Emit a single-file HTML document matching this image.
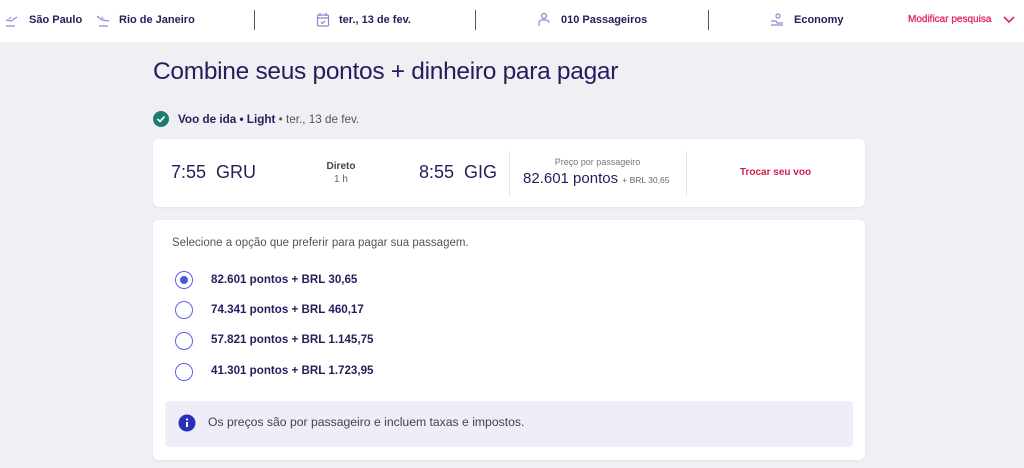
<!DOCTYPE html>
<html><head><meta charset="utf-8"><style>
*{box-sizing:border-box;margin:0;padding:0}
body{width:1024px;height:468px;overflow:hidden;background:#f0eff4;font-family:"Liberation Sans",sans-serif;color:#2a1b5c;position:relative}
.hdr{position:absolute;left:0;top:0;width:1024px;height:42px;background:#fff;font-size:11px;font-weight:bold;color:#2a1b5c}
.hdr span{position:absolute;top:14px;white-space:nowrap}
.sep{position:absolute;top:10px;width:1px;height:20px;background:#555}
.ic{position:absolute;top:12px}
.abs{position:absolute;white-space:nowrap}
.card{position:absolute;background:#fff;border-radius:6px;box-shadow:0 1px 2px rgba(0,0,0,.06)}
.radio{position:absolute;left:175px;width:18px;height:18px;border:1.5px solid #5b63e0;border-radius:50%}
.opt{position:absolute;left:211px;font-size:11.6px;font-weight:bold;color:#2a1b5c}
</style></head><body>
<div class="hdr">
<svg class="ic" style="left:5px" width="14" height="16" viewBox="0 0 14 16" fill="none" stroke="#9b7fd4" stroke-width="1.2"><path d="M1 8 L6 9 L12 5 M4 7 L6 5 M1 14 H10"/></svg>
<span style="left:29px">São Paulo</span>
<svg class="ic" style="left:96px" width="14" height="16" viewBox="0 0 14 16" fill="none" stroke="#9b7fd4" stroke-width="1.2"><path d="M1 4 L6 8 L13 9 M6 5 L7 7 M3 14 H12"/></svg>
<span style="left:119px">Rio de Janeiro</span>
<div class="sep" style="left:254px"></div>
<svg class="ic" style="left:316px" width="14" height="16" viewBox="0 0 14 16" fill="none" stroke="#9b7fd4" stroke-width="1.2"><rect x="1.5" y="3" width="11" height="11" rx="1"/><path d="M4 1v3M10 1v3M1.5 6h11M5 10l1.5 1.5L9 9"/></svg>
<span style="left:339px">ter., 13 de fev.</span>
<div class="sep" style="left:475px"></div>
<svg class="ic" style="left:537px" width="14" height="16" viewBox="0 0 14 16" fill="none" stroke="#9b7fd4" stroke-width="1.2"><circle cx="7" cy="4" r="2.5"/><path d="M2 14v-3a3 3 0 0 1 3-3h4a3 3 0 0 1 3 3"/></svg>
<span style="left:561px">010 Passageiros</span>
<div class="sep" style="left:708px"></div>
<svg class="ic" style="left:769px" width="16" height="16" viewBox="0 0 16 16" fill="none" stroke="#9b7fd4" stroke-width="1.2"><circle cx="9" cy="4" r="2"/><path d="M2 9h5l1 2h6M2 13h12"/></svg>
<span style="left:794px">Economy</span>
<span style="left:908px;color:#e0245e;font-size:10px;font-weight:normal;-webkit-text-stroke:0.3px #e0245e">Modificar pesquisa</span>
<svg class="ic" style="left:1003px;top:16px" width="12" height="8" viewBox="0 0 12 8" fill="none" stroke="#e0245e" stroke-width="1.6"><path d="M1 1l5 5 5-5"/></svg>
</div>

<div class="abs" style="left:153px;top:58px;font-size:24.5px;color:#2a1b5c;letter-spacing:-0.3px">Combine seus pontos + dinheiro para pagar</div>

<svg class="abs" style="left:153px;top:111px" width="16" height="16" viewBox="0 0 16 16"><circle cx="8" cy="8" r="8" fill="#1c7d6e"/><path d="M4.5 8l2.5 2.5 4.5-5" stroke="#fff" stroke-width="1.8" fill="none"/></svg>
<div class="abs" style="left:178px;top:113px;font-size:11.7px;font-weight:bold">Voo de ida • Light <span style="font-weight:normal;color:#555">• ter., 13 de fev.</span></div>

<div class="card" style="left:153px;top:139px;width:712px;height:68px">
<div class="abs" style="left:18px;top:23px;font-size:18px;color:#2a1b5c">7:55 &nbsp;GRU</div>
<div class="abs" style="left:173px;top:22px;font-size:10px;font-weight:bold;color:#444;text-align:center;width:30px">Direto</div>
<div class="abs" style="left:173px;top:35px;font-size:10px;color:#666;text-align:center;width:30px">1 h</div>
<div class="abs" style="left:266px;top:23px;font-size:18px;color:#2a1b5c">8:55 &nbsp;GIG</div>
<div class="abs" style="left:356px;top:12px;width:1px;height:45px;background:#e2e2e8"></div>
<div class="abs" style="left:356px;top:18px;width:177px;text-align:center;font-size:9px;color:#777">Preço por passageiro</div>
<div class="abs" style="left:370px;top:31px;font-size:15px;color:#2a1b5c">82.601 pontos <span style="font-size:8.5px;color:#666">+ BRL 30,65</span></div>
<div class="abs" style="left:533px;top:12px;width:1px;height:45px;background:#e2e2e8"></div>
<div class="abs" style="left:533px;top:28px;width:179px;text-align:center;font-size:10px;font-weight:bold;color:#d01f4b">Trocar seu voo</div>
</div>

<div class="card" style="left:153px;top:220px;width:712px;height:240px"></div>
<div class="abs" style="left:172px;top:237px;font-size:11.5px;color:#555">Selecione a opção que preferir para pagar sua passagem.</div>
<div class="radio" style="top:271px"><div style="position:absolute;left:3.5px;top:3.5px;width:8px;height:8px;border-radius:50%;background:#4a55e0"></div></div>
<div class="opt" style="top:273px">82.601 pontos + BRL 30,65</div>
<div class="radio" style="top:301px"></div>
<div class="opt" style="top:303px">74.341 pontos + BRL 460,17</div>
<div class="radio" style="top:332px"></div>
<div class="opt" style="top:333px">57.821 pontos + BRL 1.145,75</div>
<div class="radio" style="top:363px"></div>
<div class="opt" style="top:364px">41.301 pontos + BRL 1.723,95</div>
<div class="abs" style="left:165px;top:401px;width:688px;height:46px;background:#eeedf8;border-radius:4px"></div>
<svg class="abs" style="left:178px;top:414px" width="18" height="18" viewBox="0 0 18 18"><circle cx="9" cy="9" r="8.5" fill="#2c2fb8"/><rect x="8" y="8" width="2" height="5" fill="#fff"/><circle cx="9" cy="5.5" r="1.1" fill="#fff"/></svg>
<div class="abs" style="left:208px;top:415px;font-size:12.2px;color:#444">Os preços são por passageiro e incluem taxas e impostos.</div>
</body></html>
